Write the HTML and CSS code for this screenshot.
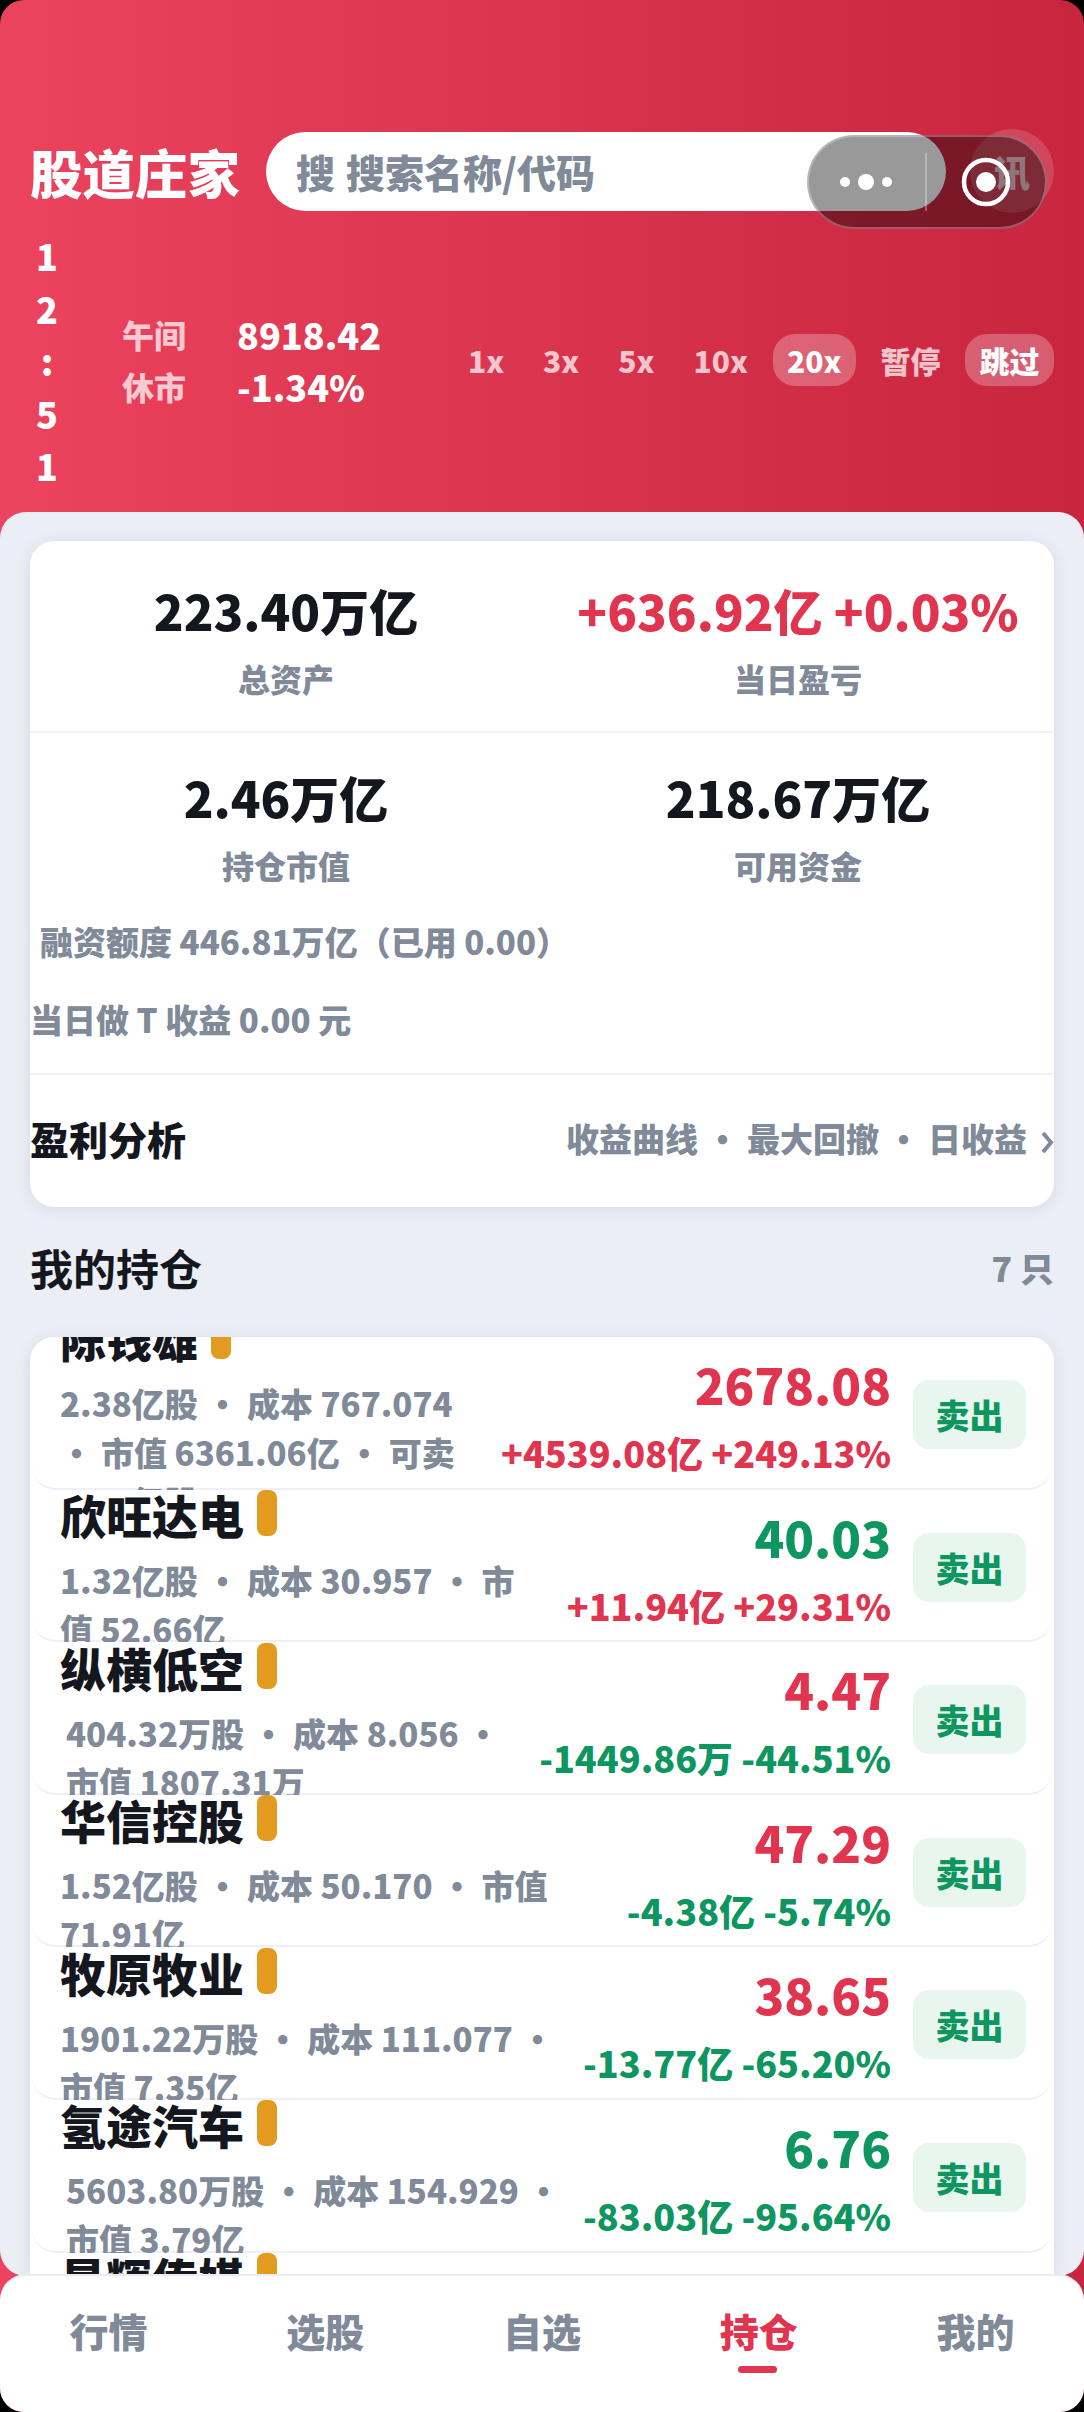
FILE: index.html
```html
<!DOCTYPE html>
<html lang="zh-CN">

<head>
	<meta charset="UTF-8">
	<meta name="viewport" content="width=device-width, initial-scale=1.0">
	<title>股道庄家</title>
	<link rel="stylesheet" href="styles.css">
</head>

<body>
	<div class="screen">
		<header class="top">
			<div class="title-row">
				<h1 class="brand">股道庄家</h1>
				<div class="search"><span class="search-key">搜</span><span>搜索名称/代码</span></div>
				<div class="news">讯</div>
			</div>
			<div class="status-row">
				<div class="clock">12:51</div>
				<div class="market">
					<div class="market-col">
						<span>午间</span>
						<span>休市</span>
					</div>
					<div class="market-col market-val">
						<span>8918.42</span>
						<span>-1.34%</span>
					</div>
				</div>
				<div class="speeds">
					<span class="speed">1x</span>
					<span class="speed">3x</span>
					<span class="speed">5x</span>
					<span class="speed">10x</span>
					<span class="speed speed-on">20x</span>
					<span class="speed">暂停</span>
					<span class="speed speed-on">跳过</span>
				</div>
			</div>
		</header>

		<div class="capsule">
			<svg class="capsule-dots" viewBox="0 0 52 20" width="52" height="20">
				<circle cx="5" cy="10" r="5" fill="#fff"/>
				<circle cx="26" cy="10" r="8" fill="#fff"/>
				<circle cx="47" cy="10" r="5" fill="#fff"/>
			</svg>
			<span class="capsule-line"></span>
			<svg class="capsule-rec" viewBox="0 0 50 50" width="50" height="50">
				<circle cx="25" cy="25" r="22" fill="none" stroke="#fff" stroke-width="4.5"/>
				<circle cx="25" cy="25" r="10" fill="#fff"/>
			</svg>
		</div>

		<main class="panel">
			<section class="card">
				<div class="stats">
					<div class="stat">
						<div class="stat-val">223.40万亿</div>
						<div class="stat-label">总资产</div>
					</div>
					<div class="stat">
						<div class="stat-val up">+636.92亿 +0.03%</div>
						<div class="stat-label">当日盈亏</div>
					</div>
				</div>
				<div class="stats stats-2">
					<div class="stat">
						<div class="stat-val">2.46万亿</div>
						<div class="stat-label">持仓市值</div>
					</div>
					<div class="stat">
						<div class="stat-val">218.67万亿</div>
						<div class="stat-label">可用资金</div>
					</div>
				</div>
				<div class="note note-credit">融资额度 446.81万亿（已用 0.00）</div>
				<div class="note note-t">当日做 T 收益 0.00 元</div>
				<div class="analysis">
					<div class="analysis-title">盈利分析</div>
					<div class="analysis-links">收益曲线<i class="dot">·</i>最大回撤<i class="dot">·</i>日收益<svg class="chev" viewBox="0 0 14 24" width="14" height="24"><path d="M3 3l8 9.5L3 22" fill="none" stroke="#808a98" stroke-width="4"/></svg></div>
				</div>
			</section>

			<div class="hold-head">
				<h2>我的持仓</h2>
				<span class="hold-count">7 只</span>
			</div>

			<section class="list">
				<div class="item">
					<div class="item-left">
						<div class="name">陈钱雄<span class="tag"></span></div>
						<div class="meta">2.38亿股<i class="dot">·</i>成本 767.074</div>
						<div class="meta"><i class="dot dot-first">·</i>市值 6361.06亿<i class="dot">·</i>可卖</div>
						<div class="meta">2.07亿股</div>
					</div>
					<div class="item-right">
						<div class="price up">2678.08</div>
						<div class="change up">+4539.08亿 +249.13%</div>
					</div>
					<div class="sell">卖出</div>
				</div>
				<div class="item">
					<div class="item-left">
						<div class="name">欣旺达电<span class="tag"></span></div>
						<div class="meta">1.32亿股<i class="dot">·</i>成本 30.957<i class="dot">·</i>市</div>
						<div class="meta">值 52.66亿</div>
					</div>
					<div class="item-right">
						<div class="price down">40.03</div>
						<div class="change up">+11.94亿 +29.31%</div>
					</div>
					<div class="sell">卖出</div>
				</div>
				<div class="item">
					<div class="item-left">
						<div class="name">纵横低空<span class="tag"></span></div>
						<div class="meta meta-in">404.32万股<i class="dot">·</i>成本 8.056<i class="dot">·</i></div>
						<div class="meta meta-in">市值 1807.31万</div>
					</div>
					<div class="item-right">
						<div class="price up">4.47</div>
						<div class="change down">-1449.86万 -44.51%</div>
					</div>
					<div class="sell">卖出</div>
				</div>
				<div class="item">
					<div class="item-left">
						<div class="name">华信控股<span class="tag"></span></div>
						<div class="meta">1.52亿股<i class="dot">·</i>成本 50.170<i class="dot">·</i>市值</div>
						<div class="meta">71.91亿</div>
					</div>
					<div class="item-right">
						<div class="price up">47.29</div>
						<div class="change down">-4.38亿 -5.74%</div>
					</div>
					<div class="sell">卖出</div>
				</div>
				<div class="item">
					<div class="item-left">
						<div class="name">牧原牧业<span class="tag"></span></div>
						<div class="meta">1901.22万股<i class="dot">·</i>成本 111.077<i class="dot">·</i></div>
						<div class="meta">市值 7.35亿</div>
					</div>
					<div class="item-right">
						<div class="price up">38.65</div>
						<div class="change down">-13.77亿 -65.20%</div>
					</div>
					<div class="sell">卖出</div>
				</div>
				<div class="item">
					<div class="item-left">
						<div class="name">氢途汽车<span class="tag"></span></div>
						<div class="meta meta-in">5603.80万股<i class="dot">·</i>成本 154.929<i class="dot">·</i></div>
						<div class="meta meta-in">市值 3.79亿</div>
					</div>
					<div class="item-right">
						<div class="price down">6.76</div>
						<div class="change down">-83.03亿 -95.64%</div>
					</div>
					<div class="sell">卖出</div>
				</div>
				<div class="item item-last">
					<div class="item-left">
						<div class="name">星辉传媒<span class="tag"></span></div>
					</div>
				</div>
			</section>
		</main>

		<nav class="tabs">
			<div class="tab">行情</div>
			<div class="tab">选股</div>
			<div class="tab">自选</div>
			<div class="tab tab-on">持仓</div>
			<div class="tab">我的</div>
		</nav>
	</div>
</body>

</html>
```

FILE: styles.css
```css
* {
	box-sizing: border-box;
}

html,
body {
	margin: 0;
	padding: 0;
	background: #000;
}

body {
	font-family: "Noto Sans CJK SC", "Noto Sans", sans-serif;
	font-weight: 900;
}

.screen {
	position: relative;
	width: 1084px;
	height: 2412px;
	overflow: hidden;
	display: flex;
	flex-direction: column;
	border-radius: 24px;
	background: linear-gradient(90deg, #ec435e, #c8253f);
}

/* header */
.top {
	height: 512px;
	flex: none;
	padding: 131px 30px 0;
	color: #fff;
}

.title-row {
	display: flex;
	align-items: center;
	height: 80px;
}

.brand {
	margin: 0;
	width: 236px;
	font-size: 52.5px;
	line-height: 80px;
	font-weight: 900;
	white-space: nowrap;
}

.search {
	width: 680px;
	height: 79px;
	display: flex;
	align-items: center;
	gap: 11px;
	padding-left: 30px;
	border-radius: 40px;
	background: #fff;
	color: #808a98;
	font-size: 39px;
	white-space: nowrap;
}

.news {
	width: 84px;
	height: 84px;
	margin-left: 24px;
	border-radius: 50%;
	background: rgba(255, 255, 255, 0.15);
	color: rgba(255, 255, 255, 0.7);
	font-size: 36px;
	line-height: 84px;
	text-align: center;
}

.status-row {
	display: flex;
	align-items: center;
	margin-top: 18px;
}

.clock {
	width: 34px;
	font-size: 36px;
	line-height: 52.5px;
	line-break: anywhere;
	text-align: center;
}

.market {
	display: flex;
	gap: 51px;
	margin-left: 58px;
	line-height: 52px;
}

.market-col {
	display: flex;
	flex-direction: column;
	font-size: 32px;
	color: rgba(255, 255, 255, 0.72);
}

.market-val {
	font-size: 36px;
	color: #fff;
}

.speeds {
	display: flex;
	align-items: center;
	gap: 10px;
	margin-left: auto;
	font-size: 30px;
	color: rgba(255, 255, 255, 0.72);
}

.speed {
	height: 52px;
	line-height: 52px;
	padding: 0 14.5px;
	border-radius: 22px;
	white-space: nowrap;
}

.speed-on {
	background: rgba(255, 255, 255, 0.26);
	color: #fff;
}

/* wechat capsule, floats over the header */
.capsule {
	position: absolute;
	left: 807px;
	top: 135px;
	width: 240px;
	height: 94px;
	display: flex;
	align-items: center;
	border: 2px solid rgba(255, 255, 255, 0.28);
	border-radius: 47px;
	background: rgba(0, 0, 0, 0.4);
}

.capsule-dots {
	margin-left: 31px;
}

.capsule-line {
	width: 2px;
	height: 58px;
	margin-left: 33px;
	background: rgba(255, 255, 255, 0.3);
}

.capsule-rec {
	margin-left: 34px;
}

/* main panel */
.panel {
	flex: none;
	height: 1764px;
	display: flex;
	flex-direction: column;
	padding: 29px 30px 0;
	border-radius: 26px;
	background: #ebeef5;
	overflow: hidden;
}

.card {
	flex: none;
	height: 666px;
	border-radius: 24px;
	background: #fff;
	box-shadow: 0 2px 16px rgba(40, 50, 80, 0.1);
	overflow: hidden;
}

.stats {
	display: grid;
	grid-template-columns: 1fr 1fr;
	height: 192px;
	padding-top: 29px;
	border-bottom: 2px solid #f1f3f8;
}

.stats-2 {
	height: 158px;
	padding-top: 24px;
	border-bottom: 0;
}

.stat {
	text-align: center;
}

.stat-val {
	font-size: 49px;
	line-height: 80px;
	color: #15171f;
	white-space: nowrap;
}

.stat-label {
	margin-top: 2px;
	font-size: 32px;
	line-height: 52px;
	color: #808a98;
}

.note {
	font-size: 33px;
	color: #808a98;
	white-space: nowrap;
}

.note-credit {
	margin-top: 24px;
	padding-left: 10px;
	line-height: 52px;
}

.note-t {
	margin-top: 26px;
	line-height: 52px;
}

.analysis {
	display: flex;
	align-items: center;
	justify-content: space-between;
	height: 128px;
	margin-top: 28px;
	border-top: 2px solid #f1f3f8;
}

.analysis-title {
	font-size: 39px;
	color: #15171f;
}

.analysis-links {
	display: flex;
	align-items: center;
	font-size: 33px;
	color: #808a98;
	white-space: nowrap;
}

.dot {
	font-style: normal;
	margin: 0 8px;
}

.dot-first {
	margin-left: 0;
}

.chev {
	margin-left: 13px;
	margin-top: 8px;
}

.hold-head {
	display: flex;
	align-items: center;
	justify-content: space-between;
	height: 130px;
	flex: none;
	padding-bottom: 10px;
}

.hold-head h2 {
	margin: 0;
	font-size: 43px;
	color: #15171f;
}

.hold-count {
	font-size: 34px;
	color: #808a98;
}

/* holdings list, scrolled so the first row is cut off */
.list {
	flex: 1;
	min-height: 0;
	overflow: hidden;
	border-radius: 24px 24px 0 0;
	background: #fff;
	box-shadow: 0 2px 16px rgba(40, 50, 80, 0.1);
}

.item {
	position: relative;
	display: flex;
	height: 152.6px;
	padding: 0 26px 0 28px;
	margin: 0 2px;
	border-bottom: 2px solid #eef0f6;
	border-radius: 0 0 24px 24px;
	background: #fff;
}

.item-left {
	flex: 1;
	min-width: 0;
	height: 150px;
	padding-top: 15px;
	display: flex;
	flex-direction: column;
	justify-content: center;
}

.item-last .item-left {
	justify-content: flex-start;
	padding-top: 0;
}

.name {
	flex: none;
	display: flex;
	align-items: flex-start;
	height: 46px;
	font-size: 46px;
	line-height: 48px;
	color: #15171f;
	white-space: nowrap;
}

.tag {
	width: 20px;
	height: 46px;
	margin-left: 13px;
	border-radius: 8px;
	background: #e29a1f;
}

.meta {
	flex: none;
	font-size: 33px;
	line-height: 49px;
	color: #808a98;
	white-space: nowrap;
}

.name + .meta {
	margin-top: 20px;
}

.meta-in {
	padding-left: 6px;
}

.item-right {
	flex: none;
	margin-top: 17px;
	text-align: right;
	white-space: nowrap;
}

.price {
	font-size: 49px;
	line-height: 60px;
}

.change {
	margin-top: 12px;
	font-size: 36px;
	line-height: 52px;
}

.up {
	color: #e0344f;
}

.down {
	color: #0e9660;
}

.sell {
	flex: none;
	width: 113px;
	height: 69px;
	margin: 43px 0 0 22px;
	border-radius: 16px;
	background: #e9f6ef;
	color: #0e9660;
	font-size: 34px;
	line-height: 69px;
	text-align: center;
}

/* bottom nav */
.tabs {
	position: absolute;
	left: 0;
	right: 0;
	bottom: 0;
	display: grid;
	grid-template-columns: repeat(5, 1fr);
	height: 138px;
	padding-top: 26px;
	border-top: 2px solid #e9ecf3;
	border-radius: 26px 26px 0 0;
	background: #fff;
}

.tab {
	position: relative;
	font-size: 39px;
	line-height: 56px;
	text-align: center;
	color: #808a98;
}

.tab-on {
	color: #e0344f;
}

.tab-on::after {
	content: "";
	position: absolute;
	left: 50%;
	top: 64px;
	width: 39px;
	height: 7px;
	margin-left: -21px;
	border-radius: 4px;
	background: #e0344f;
}
```
